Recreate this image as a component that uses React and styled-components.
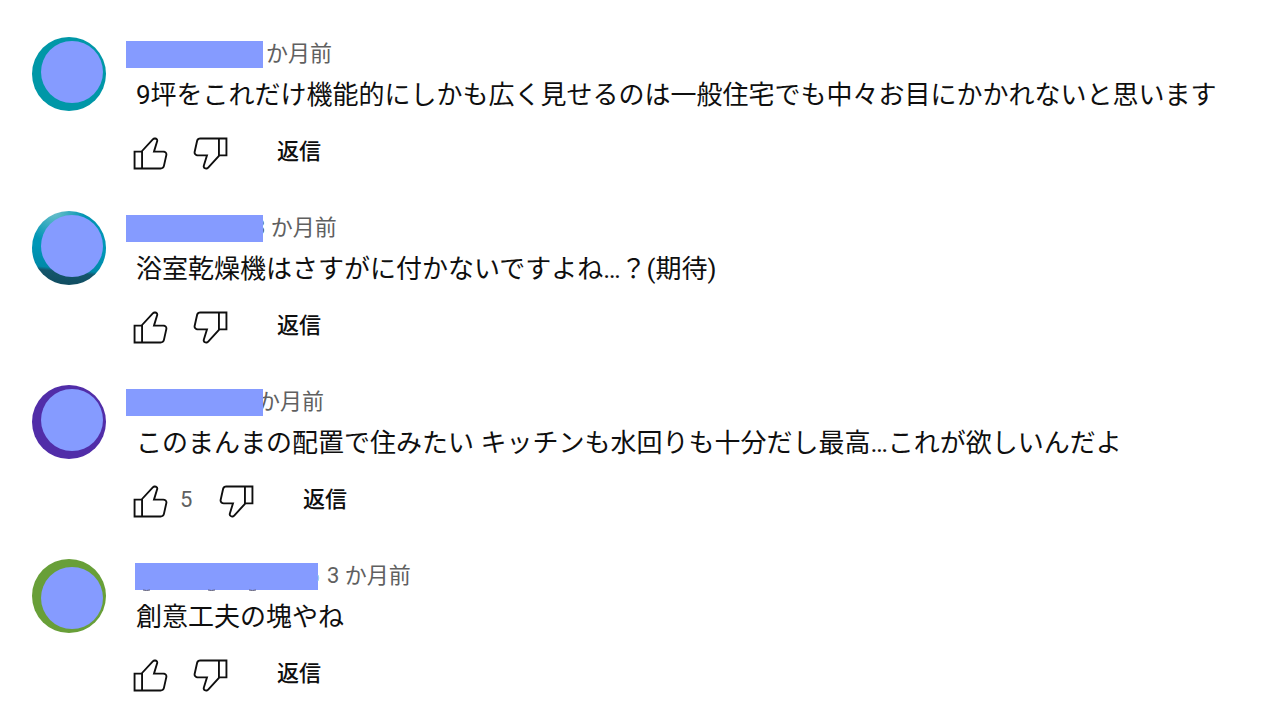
import React from 'react';
import styled, { createGlobalStyle } from 'styled-components';

const GlobalStyle = createGlobalStyle`
  * {
    box-sizing: border-box;
  }

  body {
    margin: 0;
    background: #ffffff;
    color: #0f0f0f;
    font-family: Roboto, 'Noto Sans CJK JP', sans-serif;
  }
`;

const CommentList = styled.main`
  display: flex;
  flex-direction: column;
  gap: 36px;
  padding: 37px 32px 0;
`;

const Comment = styled.article`
  display: flex;
  align-items: flex-start;
  gap: 30px;
`;

const Avatar = styled.div`
  flex: none;
  width: 74px;
  height: 74px;
  padding: ${({ $low }) => ($low ? '8px' : '4px')} 0 0 9px;
  border-radius: 50%;
  background: ${({ $color }) => $color};
`;

const AvatarCover = styled.div`
  width: 62px;
  height: 62px;
  border-radius: 50%;
  background: #859bff;
`;

const Body = styled.div`
  flex: 1;
  min-width: 0;
`;

const Meta = styled.header`
  display: flex;
  align-items: center;
  height: 34px;
  margin-left: ${({ $wide }) => ($wide ? '-1px' : '-10px')};
`;

// Sits above the time so it can hide the start of it
const NameCover = styled.div`
  position: relative;
  z-index: 1;
  width: ${({ $wide }) => ($wide ? '183px' : '137px')};
  height: 27px;
  background: #859bff;
`;

const Remnants = styled.svg`
  display: block;
  width: 100%;
  height: 100%;
  overflow: visible;
`;

const Time = styled.time`
  margin-left: ${({ $shift }) => $shift}px;
  font-size: 22px;
  line-height: 32px;
  color: #606060;
  white-space: nowrap;
`;

const Text = styled.p`
  margin: 5px 0 0;
  font-size: 26px;
  line-height: 38px;
`;

const Actions = styled.div`
  display: flex;
  align-items: center;
  height: 46px;
  margin: 15px 0 0 -8px;
`;

const IconButton = styled.button`
  display: flex;
  padding: 0;
  border: 0;
  background: none;
  color: inherit;
  cursor: pointer;

  svg {
    width: 45px;
    height: 45px;
    fill: currentColor;
  }
`;

const Count = styled.span`
  width: 26px;
  padding-left: 7px;
  font-size: 22px;
  line-height: 32px;
  color: #606060;
`;

const DislikeSlot = styled.span`
  margin-left: 15px;
`;

const ReplyButton = styled.button`
  margin-left: 44px;
  padding: 0;
  border: 0;
  background: none;
  color: inherit;
  font: 500 22px/32px Roboto, 'Noto Sans CJK JP', sans-serif;
  cursor: pointer;
`;

const LikeIcon = () => (
  <svg viewBox="0 0 24 24" aria-hidden="true">
    <path d="M18.77,11h-4.23l1.52-4.94C16.38,5.03,15.54,4,14.38,4c-0.58,0-1.14,0.24-1.52,0.65L7,11H3v10h4h1h9.43c1.06,0,1.98-0.67,2.19-1.61l1.34-6C21.23,12.15,20.18,11,18.77,11z M7,20H4v-8h3V20z M19.98,13.17l-1.34,6C18.54,19.65,18.03,20,17.43,20H8v-8.61l5.6-6.06C13.79,5.12,14.08,5,14.38,5c0.26,0,0.5,0.11,0.63,0.3c0.07,0.1,0.15,0.26,0.09,0.47l-1.52,4.94L13.18,12h1.35h4.23c0.41,0,0.8,0.17,1.03,0.46C19.92,12.61,20.05,12.86,19.98,13.17z" />
  </svg>
);

const DislikeIcon = () => (
  <svg viewBox="0 0 24 24" aria-hidden="true">
    <path d="M17,4h-1H6.57C5.5,4,4.59,4.67,4.38,5.61l-1.34,6C2.77,12.85,3.82,14,5.23,14h4.23l-1.52,4.94C7.62,19.97,8.46,21,9.62,21c0.58,0,1.14-0.24,1.52-0.65L17,14h4V4H17z M10.4,19.67C10.21,19.88,9.92,20,9.62,20c-0.26,0-0.5-0.11-0.63-0.3c-0.07-0.1-0.15-0.26-0.09-0.47l1.52-4.94l0.4-1.29H9.46H5.23c-0.41,0-0.8-0.17-1.03-0.46c-0.12-0.15-0.25-0.4-0.18-0.72l1.34-6C5.46,5.35,5.97,5,6.57,5H16v8.61L10.4,19.67z M20,13h-3V5h3V13z" />
  </svg>
);

const comments = [
  {
    id: 1,
    color: '#0097a7',
    time: 'か月前',
    shift: 3,
    text: '9坪をこれだけ機能的にしかも広く見せるのは一般住宅でも中々お目にかかれないと思います',
  },
  {
    id: 2,
    color:
      'radial-gradient(circle at 30% 0%, #6cc0cc 0%, transparent 35%), linear-gradient(186deg, #0092b0 0%, #0097b7 50%, #0089a8 76%, #14566b 80%, #0f4a5e 100%)',
    time: '3 か月前',
    shift: -10,
    text: '浴室乾燥機はさすがに付かないですよね…？(期待)',
  },
  {
    id: 3,
    color: '#512da8',
    time: 'か月前',
    shift: -5,
    likes: 5,
    text: 'このまんまの配置で住みたい キッチンも水回りも十分だし最高…これが欲しいんだよ',
  },
  {
    id: 4,
    color: '#689f38',
    time: '3 か月前',
    shift: 9,
    wide: true,
    text: '創意工夫の塊やね',
  },
];

const App = () => (
  <>
    <GlobalStyle />
    <CommentList>
      {comments.map(({ id, color, time, shift, likes, wide, text }) => (
        <Comment key={id}>
          <Avatar $color={color} $low={wide}>
            <AvatarCover />
          </Avatar>
          <Body>
            <Meta $wide={wide}>
              <NameCover $wide={wide}>
                {wide && (
                  <Remnants viewBox="0 0 183 27" fill="none" aria-hidden="true">
                    <path d="M8 27q3.500 1 7 0M73 27q3.500 1 7 0M114 27q3.500 1 7 0" stroke="#5a5a78" />
                    <path d="M183 12q1.500 3 0 6" stroke="#8fcdf0" />
                  </Remnants>
                )}
              </NameCover>
              <Time $shift={shift}>{time}</Time>
            </Meta>
            <Text>{text}</Text>
            <Actions>
              <IconButton aria-label="高く評価">
                <LikeIcon />
              </IconButton>
              {likes && <Count>{likes}</Count>}
              <DislikeSlot>
                <IconButton aria-label="低く評価">
                  <DislikeIcon />
                </IconButton>
              </DislikeSlot>
              <ReplyButton>返信</ReplyButton>
            </Actions>
          </Body>
        </Comment>
      ))}
    </CommentList>
  </>
);

export default App;
